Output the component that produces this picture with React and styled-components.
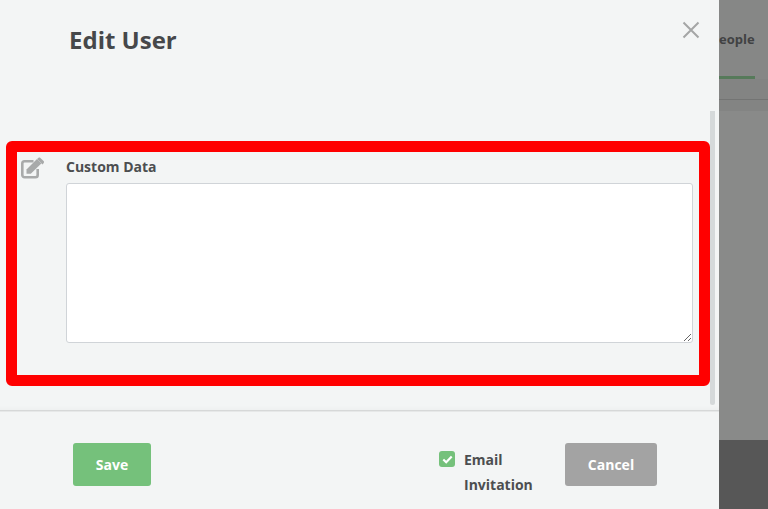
import React from "react";
import styled, { createGlobalStyle } from "styled-components";

const Global = createGlobalStyle`
  html, body { margin: 0; padding: 0; width: 768px; height: 509px; overflow: hidden; }
  * { box-sizing: border-box; }
  body { font-family: "Open Sans", "Liberation Sans", sans-serif; }
`;

const Page = styled.div`
  width: 768px;
  height: 509px;
  display: flex;
  background: #888988;
  overflow: hidden;
`;

const Drawer = styled.div`
  width: 719px;
  height: 509px;
  flex: none;
  display: flex;
  flex-direction: column;
  background: #f3f5f5;
`;

const Header = styled.header`
  height: 111px;
  flex: none;
  display: flex;
  justify-content: space-between;
  align-items: flex-start;
  padding: 24px 18px 0 69px;
`;

const Title = styled.h1`
  margin: 0;
  font-size: 24px;
  line-height: 32px;
  font-weight: 700;
  color: #46484a;
`;

const CloseButton = styled.button`
  width: 20px;
  height: 20px;
  margin-top: -4px;
  padding: 0;
  border: 0;
  background: none;
  display: flex;
`;

const ScrollArea = styled.div`
  height: 300px;
  flex: none;
  display: flex;
  align-items: flex-start;
  padding: 30px 5px 0 6px;
  border-bottom: 1px solid #d6d8d8;
  box-shadow: inset 0 -5px 5px -4px rgba(0, 0, 0, 0.03), 0 1px 0 #e6e8e8;
`;

const Highlight = styled.section`
  width: 704px;
  height: 245px;
  flex: none;
  display: flex;
  gap: 21px;
  padding: 5px 6px 0 4px;
  border: 11px solid #ff0000;
  border-radius: 6px;
`;

const IconSlot = styled.div`
  width: 24px;
  flex: none;
`;

const Field = styled.div`
  flex: 1;
  min-width: 0;
  display: flex;
  flex-direction: column;
`;

const Label = styled.label`
  font-size: 14px;
  line-height: 20px;
  height: 26px;
  font-weight: 700;
  color: #4c4e50;
`;

const TextArea = styled.textarea`
  display: block;
  width: 627px;
  height: 160px;
  padding: 8px;
  background: #fff;
  border: 1px solid #d0d4d8;
  border-radius: 3px;
  outline: none;
`;

const ScrollThumb = styled.div`
  width: 5px;
  height: 294px;
  margin-top: -30px;
  flex: none;
  border-radius: 0 0 3px 3px;
  background: #d5d9da;
`;

const Footer = styled.footer`
  flex: 1;
  display: flex;
  align-items: flex-start;
  padding: 32px 62px 0 73px;
`;

const Button = styled.button`
  width: ${(p) => p.$width}px;
  height: 43px;
  flex: none;
  border: 0;
  border-radius: 3px;
  background: ${(p) => p.$bg};
  color: #fff;
  font-family: inherit;
  font-size: 14px;
  font-weight: 700;
  padding: 0;
`;

const Invitation = styled.div`
  display: flex;
  gap: 9px;
  margin: 4px 32px 0 auto;
`;

const Check = styled.span`
  width: 16px;
  height: 16px;
  margin-top: 4px;
  flex: none;
  display: flex;
  align-items: center;
  justify-content: center;
  background: #75c17b;
  border-radius: 3px;
`;

const InvitationText = styled.span`
  width: 69px;
  font-size: 14px;
  line-height: 25px;
  font-weight: 700;
  color: #4c4e50;
`;

const Backdrop = styled.div`
  flex: 1;
  min-width: 0;
  display: flex;
  flex-direction: column;
`;

const Tabs = styled.div`
  height: 79px;
  flex: none;
  overflow: hidden;
  background: #868786;
`;

const TabLabel = styled.span`
  display: block;
  margin: 29px 0 0 0;
  height: 47px;
  font-size: 13px;
  line-height: 20px;
  font-weight: 700;
  color: #414243;
`;

const TabUnderline = styled.div`
  width: 36px;
  height: 3px;
  background: #567a5a;
`;

const SubBar = styled.div`
  height: 21px;
  flex: none;
  background: #838483;
  border-bottom: 1px solid #737473;
`;

const SubStrip = styled.div`
  height: 11px;
  flex: none;
  background: #838483;
`;

const Middle = styled.div`
  flex: 1;
  background: #898a89;
`;

const BottomBlock = styled.div`
  height: 69px;
  flex: none;
  background: #575757;
`;

export default function App() {
  return (
    <Page>
      <Global />
      <Drawer>
        <Header>
          <Title>Edit User</Title>
          <CloseButton aria-label="Close">
            <svg width="20" height="20" viewBox="0 0 20 20" fill="none">
              <path d="M2.500 2.500 L17.500 17.500 M17.500 2.500 L2.500 17.500" stroke="#a4a6a6" strokeWidth="2" />
            </svg>
          </CloseButton>
        </Header>
        <ScrollArea>
          <Highlight>
            <IconSlot>
              <svg width="24" height="22" viewBox="0 0 24 22" fill="#a8aaaa">
                <path
                  d="M12.500 4.300H3.500a2.200 2.200 0 0 0-2.200 2.200v11.500a2.200 2.200 0 0 0 2.200 2.200h11a2.200 2.200 0 0 0 2.200-2.200v-6"
                  fill="none"
                  stroke="#a8aaaa"
                  strokeWidth="2.600"
                />
                <path d="M5.500 16.800V12.600L16 2.100l4.300 4.300L9.800 16.800z" />
                <path d="M17.300.9c.6-.6 1.500-.6 2.100 0l3.200 3.200c.6.6.6 1.500 0 2.100l-1.200 1.200-5.300-5.300z" />
              </svg>
            </IconSlot>
            <Field>
              <Label>Custom Data</Label>
              <TextArea />
            </Field>
          </Highlight>
          <ScrollThumb />
        </ScrollArea>
        <Footer>
          <Button $width={78} $bg="#75c17b">Save</Button>
          <Invitation>
            <Check>
              <svg width="11" height="9" viewBox="0 0 11 9" fill="none">
                <path d="M1.300 4.500 4.200 7.200 9.700 1.600" stroke="#fff" strokeWidth="2.200" />
              </svg>
            </Check>
            <InvitationText>Email Invitation</InvitationText>
          </Invitation>
          <Button $width={92} $bg="#a3a3a3">Cancel</Button>
        </Footer>
      </Drawer>
      <Backdrop>
        <Tabs>
          <TabLabel>eople</TabLabel>
          <TabUnderline />
        </Tabs>
        <SubBar />
        <SubStrip />
        <Middle />
        <BottomBlock />
      </Backdrop>
    </Page>
  );
}
